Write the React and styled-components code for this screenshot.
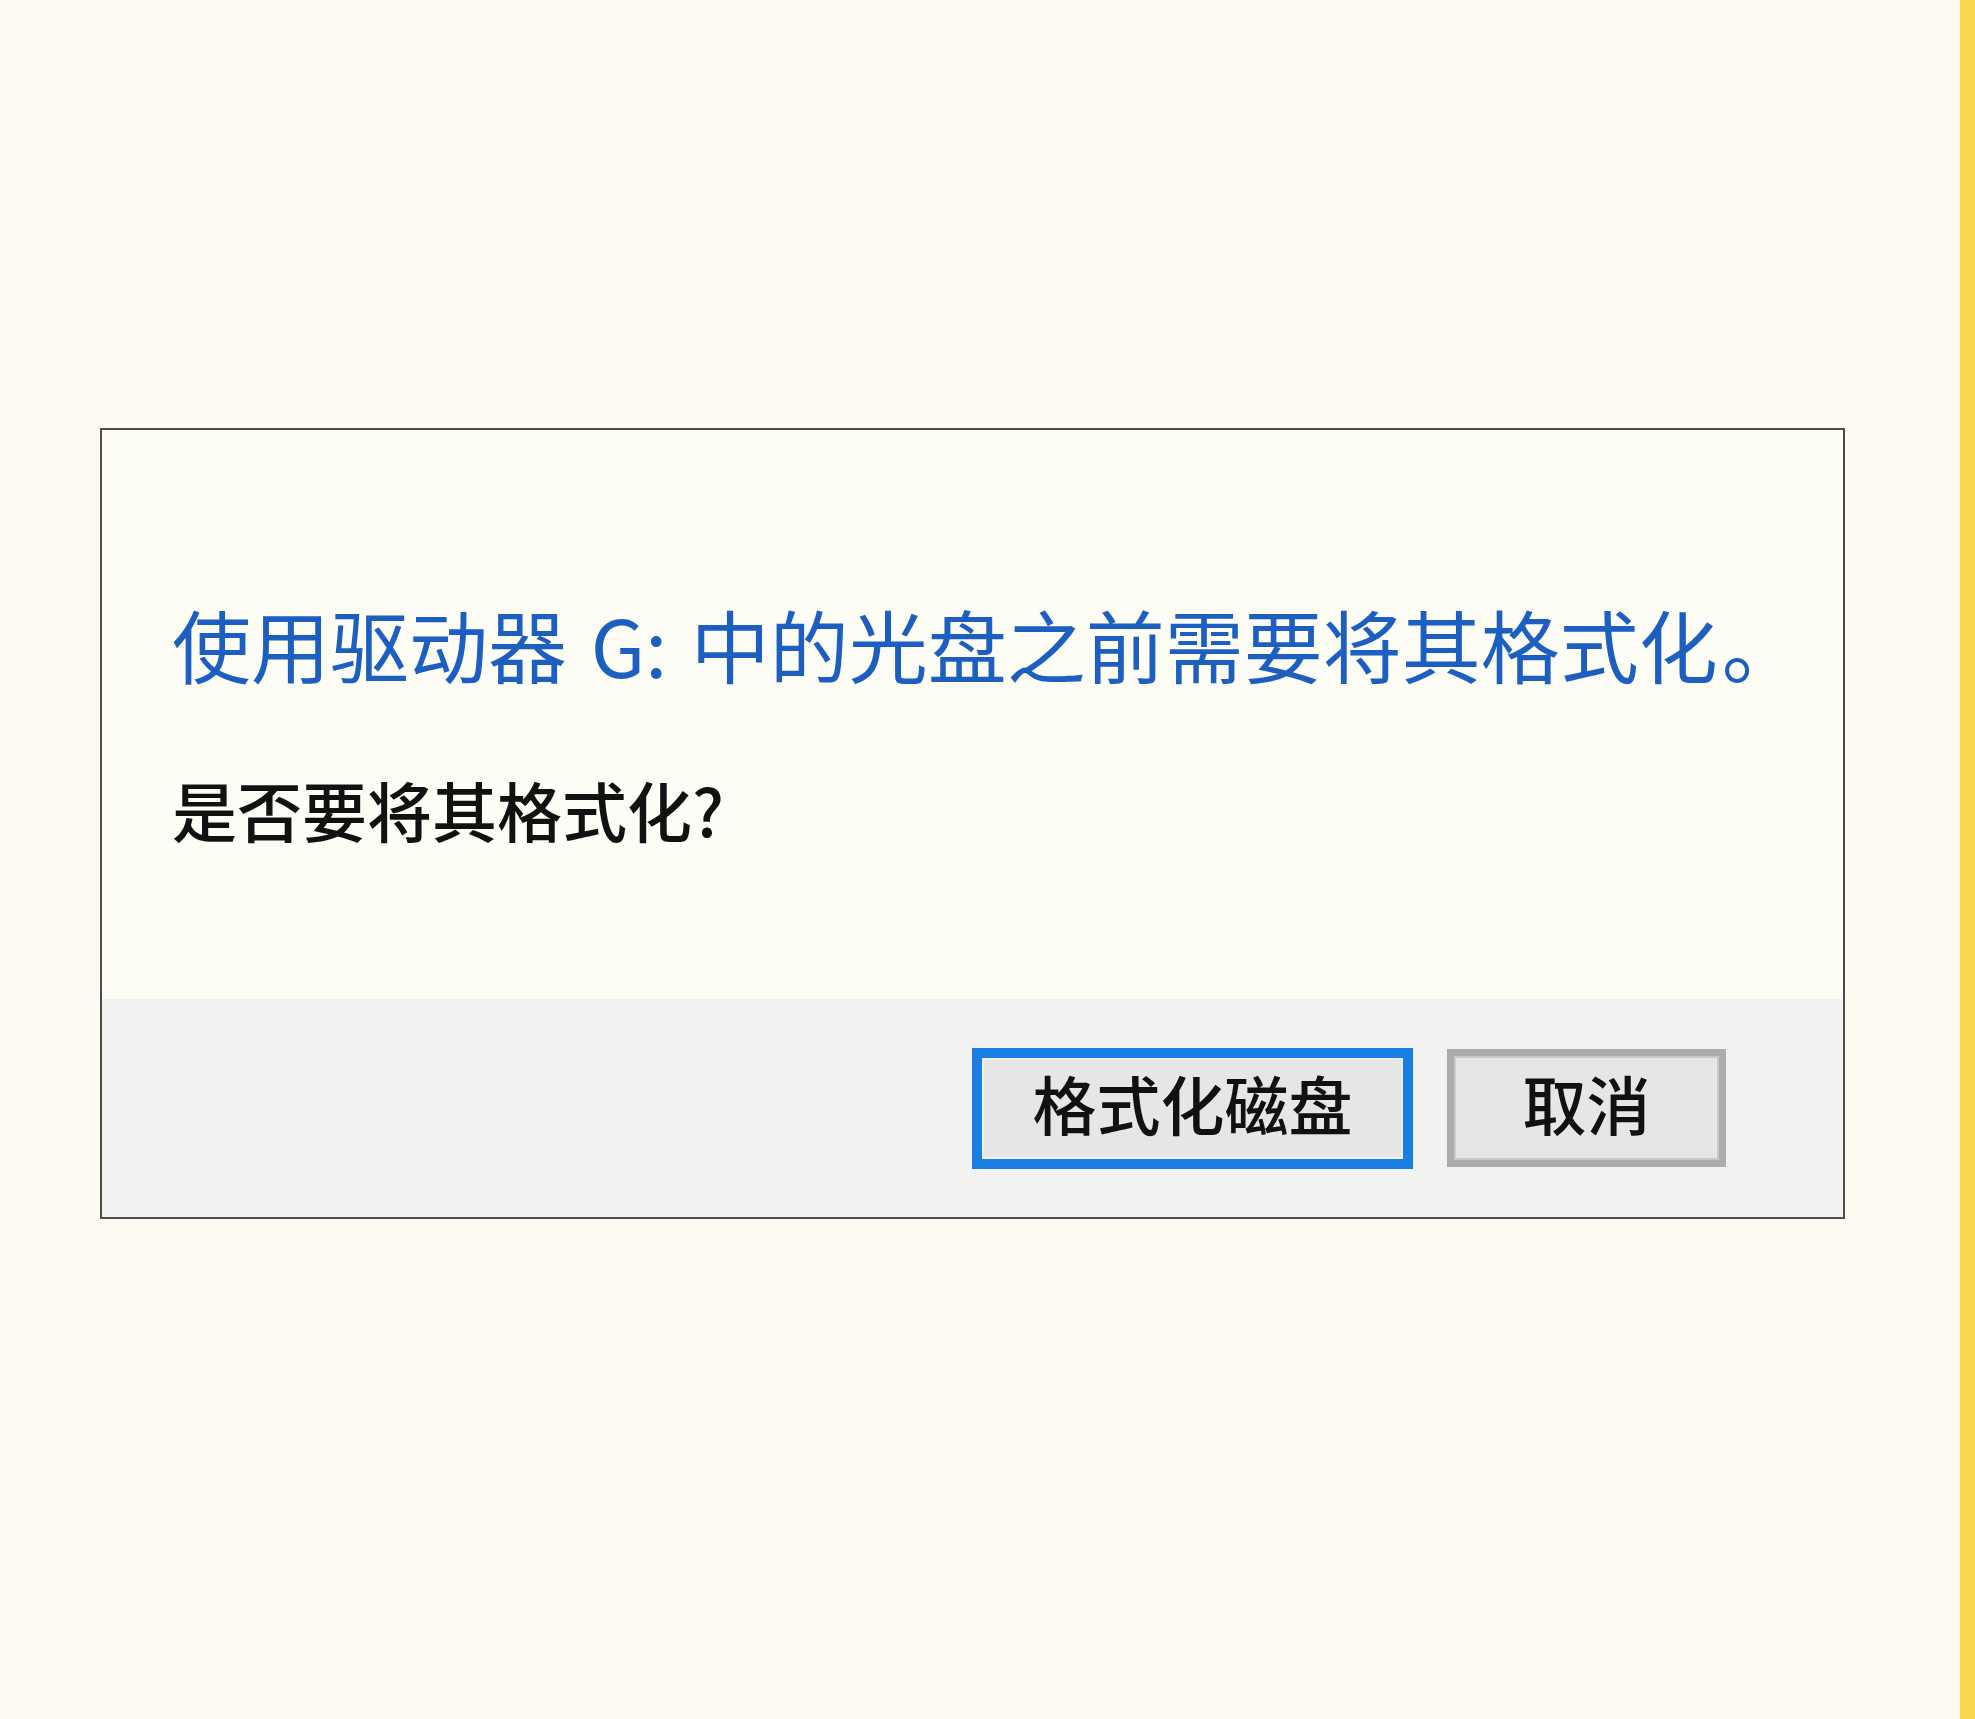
import styled, { createGlobalStyle } from 'styled-components';

const GlobalStyle = createGlobalStyle`
  html, body {
    margin: 0;
    padding: 0;
  }
  body {
    background: #fdfbf1;
    font-family: "Noto Sans CJK SC", "Noto Sans", sans-serif;
  }
`

const Page = styled.div`
  display: flex;
  width: 1975px;
  height: 1719px;
  overflow: hidden;
`
const Stage = styled.div`
  flex: 1;
  padding: 428px 0 0 100px;
`
const Stripe = styled.div`
  width: 15px;
  background: #f8d84c;
`
const Dialog = styled.div`
  width: 1741px;
  height: 787px;
  border: 2px solid #4d4d4d;
  background: #fdfcf5;
  display: flex;
  flex-direction: column;
`
const Body = styled.div`
  flex: 1;
  padding: 167px 0 0 70px;
  display: flex;
  flex-direction: column;
`
const Title = styled.div`
  font-size: 79px;
  line-height: 1.2;
  color: #1d5fc0;
  white-space: nowrap;
  word-spacing: 6px;
`
const Stop = styled.span`
  margin-left: 4px;
`
const Question = styled.div`
  margin-top: 78px;
  font-size: 65px;
  line-height: 1.2;
  color: #111;
  font-weight: 500;
  white-space: nowrap;
`
const Footer = styled.div`
  height: 218px;
  background: #f2f2f1;
  display: flex;
  align-items: center;
  justify-content: flex-end;
  gap: 34px;
  padding-right: 117px;
`
const Button = styled.button`
  box-sizing: border-box;
  height: ${p => p.$primary ? '121px' : '118px'};
  width: ${p => p.$primary ? '441px' : '279px'};
  border: ${p => p.$primary ? '10px solid #1b7ee2' : '7px solid #acacac'};
  box-shadow: inset 0 0 0 2px ${p => p.$primary ? '#f0f0f0' : '#c9c9c9'};
  background: #e6e6e6;
  color: #111;
  font-family: "Noto Sans CJK SC", "Noto Sans", sans-serif;
  font-size: 64px;
  font-weight: 500;
  line-height: 1;
  padding: 0 0 12px;
  display: flex;
  align-items: center;
  justify-content: center;
`

const App = () => {
  return (
    <Page>
      <GlobalStyle />
      <Stage>
        <Dialog>
          <Body>
            <Title>使用驱动器 G: 中的光盘之前需要将其格式化<Stop>。</Stop></Title>
            <Question>是否要将其格式化?</Question>
          </Body>
          <Footer>
            <Button $primary>格式化磁盘</Button>
            <Button>取消</Button>
          </Footer>
        </Dialog>
      </Stage>
      <Stripe />
    </Page>
  )
}

export default App
